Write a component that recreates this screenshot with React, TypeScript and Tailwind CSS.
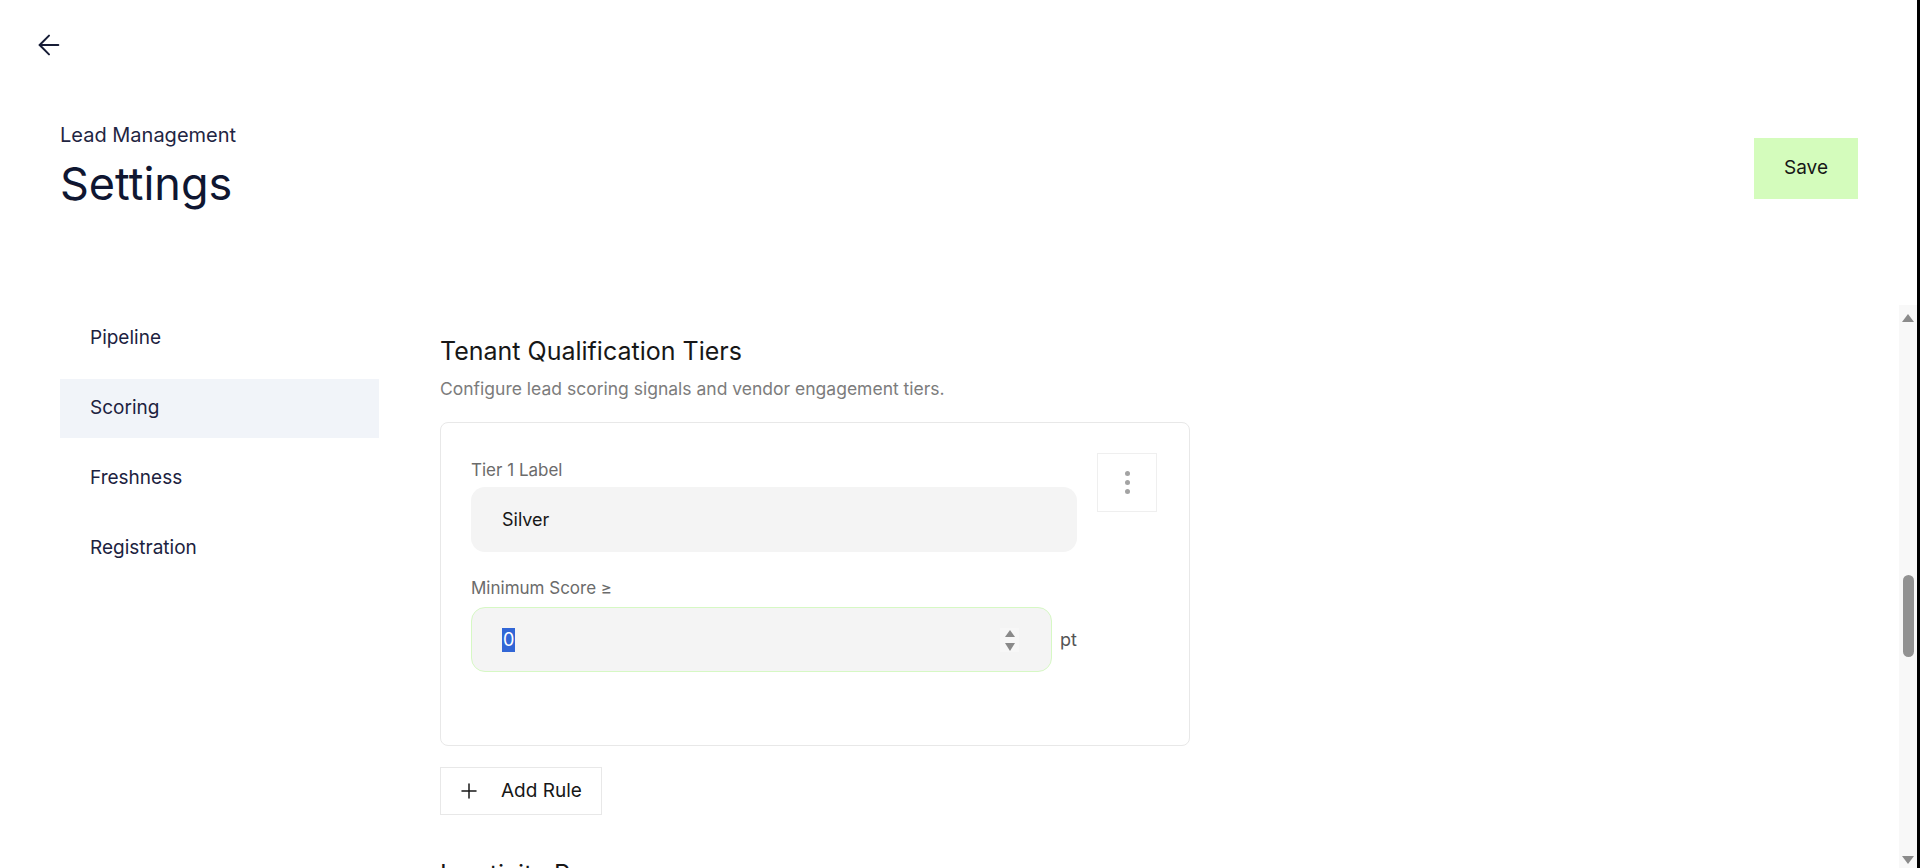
import { ArrowLeft, Plus } from 'lucide-react';

const NAV_ITEMS = ['Pipeline', 'Scoring', 'Freshness', 'Registration'];
const ACTIVE_NAV = 'Scoring';

export default function App() {
  return (
    <div className="h-screen overflow-hidden bg-white flex flex-col border-r-[3px] border-black font-['Inter','Noto_Sans',sans-serif]">
      <header className="shrink-0">
        <div className="pt-[29px] pl-[33px]">
          <button className="w-8 h-8 flex items-center justify-center text-[#161c36]">
            <ArrowLeft size={32} strokeWidth={1.5} />
          </button>
        </div>
        <div className="mt-[60px] pl-[60px] pr-[59px] flex items-start justify-between">
          <div>
            <p className="text-[20px] leading-[28px] text-[#1f2542]">Lead Management</p>
            <h1 className="mt-[8px] text-[45px] leading-[54px] text-[#0f1631]">Settings</h1>
          </div>
          <button className="mt-[17px] w-[104px] h-[61px] bg-[#d4fcbc] text-[19px] text-neutral-900">
            Save
          </button>
        </div>
      </header>

      <div className="mt-[94px] flex-1 min-h-0 flex">
        <nav className="w-[319px] ml-[60px] pt-[4px] flex flex-col gap-[11px] shrink-0">
          {NAV_ITEMS.map((item) => (
            <a
              key={item}
              className={`h-[59px] pl-[30px] flex items-center text-[19px] text-[#1c2240] ${
                item === ACTIVE_NAV ? 'bg-[#f1f4f9]' : ''
              }`}
            >
              {item}
            </a>
          ))}
        </nav>

        <main className="ml-[61px] flex-1 min-w-0 overflow-hidden pt-[30px]">
          <TierSection />
          <InactivitySection />
        </main>

        <Scrollbar />
      </div>
    </div>
  );
}

function TierSection() {
  return (
    <section>
      <h2 className="text-[25px] leading-[32px] text-neutral-900">Tenant Qualification Tiers</h2>
      <p className="mt-[8px] text-[17.5px] leading-[28px] text-[#7c7c7c]">
        Configure lead scoring signals and vendor engagement tiers.
      </p>

      <div className="mt-[19px] w-[750px] rounded-lg border border-[#e8e8e8] pt-[30px] pl-[30px] pr-[32px] flex gap-[20px]">
        <div className="flex-1 min-w-0 pb-[73px]">
          <label className="mt-[5px] block text-[17px] leading-[24px] text-[#6b6b6b]">Tier 1 Label</label>
          <div className="mt-[5px] h-[65px] rounded-[14px] bg-[#f4f4f4] pl-[31px] flex items-center text-[18px] text-neutral-900">
            Silver
          </div>

          <label className="mt-[24px] block text-[17px] leading-[24px] text-[#6b6b6b]">Minimum Score ≥</label>
          <div className="mt-[7px] flex items-center">
            <div className="flex-1 h-[65px] rounded-[14px] bg-[#f4f4f4] border border-[#d6f8c4] pl-[30px] pr-[32px] flex items-center justify-between">
              <span className="inline-block h-[24px] leading-[24px] px-[1px] bg-[#3166d6] text-white text-[18px]">0</span>
              <SpinArrows />
            </div>
            <span className="ml-[8px] text-[18px] text-[#555]">pt</span>
          </div>
        </div>

        <button className="w-[60px] h-[59px] shrink-0 border border-[#efefef] flex flex-col items-center justify-center gap-[4px]">
          <span className="w-[5px] h-[5px] rounded-full bg-[#a3a3a3]" />
          <span className="w-[5px] h-[5px] rounded-full bg-[#a3a3a3]" />
          <span className="w-[5px] h-[5px] rounded-full bg-[#a3a3a3]" />
        </button>
      </div>

      <button className="mt-[21px] h-[48px] w-[162px] border border-[#e8e8e8] pl-[16px] flex items-center gap-[20px] text-[19px] text-neutral-900">
        <Plus size={24} strokeWidth={1.5} />
        Add Rule
      </button>
    </section>
  );
}

function InactivitySection() {
  return (
    <section className="mt-[43px]">
      <h2 className="text-[25px] leading-[32px] text-neutral-900">Inactivity Response</h2>
      <p className="mt-[8px] text-[17.5px] leading-[28px] text-[#7c7c7c]">
        Decide when a lead is considered stale.
      </p>
      <div className="mt-[19px] w-[750px] h-[200px] rounded-lg border border-[#e8e8e8]" />
    </section>
  );
}

function SpinArrows() {
  return (
    <svg width="19" height="24" viewBox="0 0 19 24" className="bg-[#f7f7f7]">
      <polygon points="5,9 15,9 10,2" fill="#8a8a8a" />
      <polygon points="5,15 15,15 10,23" fill="#8a8a8a" />
    </svg>
  );
}

function Scrollbar() {
  return (
    <div className="w-[18px] ml-auto shrink-0 bg-[#f8f8f8] flex flex-col items-center">
      <svg width="12" height="8" viewBox="0 0 12 8" className="mt-[9px]">
        <polygon points="6,0 12,8 0,8" fill="#8b8b8b" />
      </svg>
      <div className="mt-[253px] w-[11px] h-[82px] rounded-full bg-[#929292]" />
      <svg width="12" height="8" viewBox="0 0 12 8" className="mt-auto mb-[4px]">
        <polygon points="0,0 12,0 6,8" fill="#8b8b8b" />
      </svg>
    </div>
  );
}
